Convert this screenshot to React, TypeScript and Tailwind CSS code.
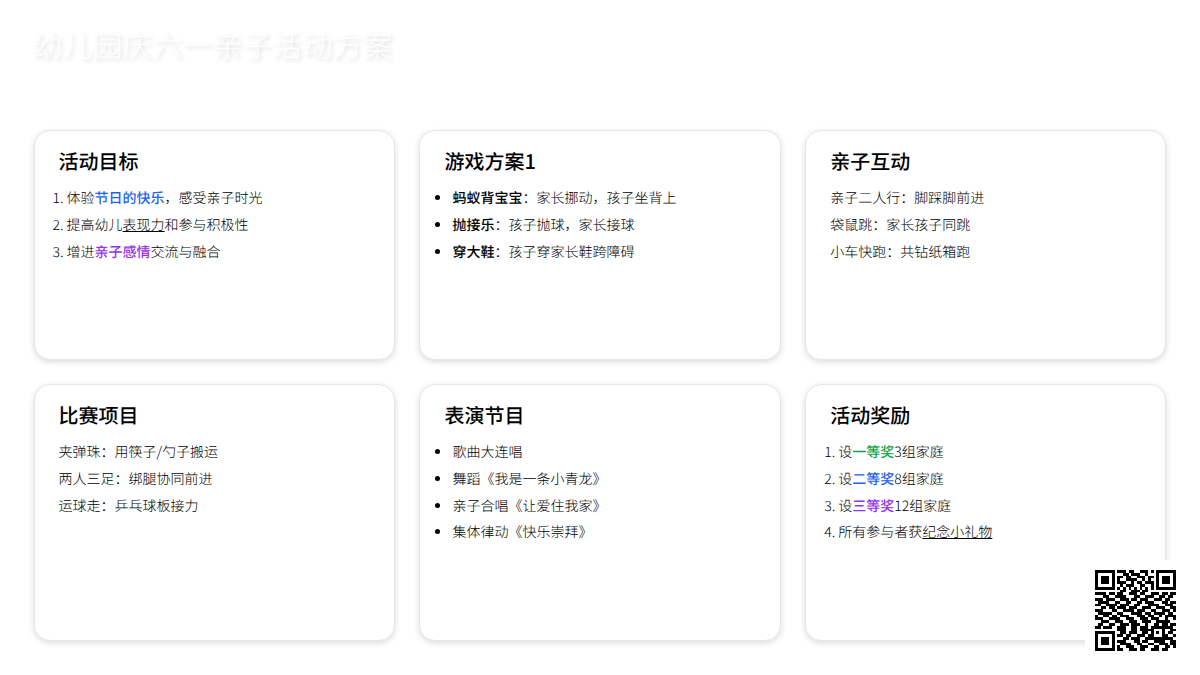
import React from "react";

const DATA = [
  "000000001110110011101000000000",
  "000000000011011100100000000000",
  "000000001101100111011000000000",
  "000000001001111001010000000000",
  "000000001110010110111000000000",
  "000000000101110011001000000000",
  "000000001010101010101000000000",
  "000000000110011101100000000000",
  "11110110110011101100111011011",
  "00011001111000110011100110110",
  "11101110011101101110011101100",
  "01111001100110011011100011011",
  "11001111011100110001111001110",
  "00110110111011100111001110011",
  "11100011001111011100110011101",
  "01111100110001111011011110110",
  "10011011011100011101100101111",
  "11100111100111001110111001001",
  "00111001110011100111001111100",
  "01100110011101110010011011011",
  "11011100111001101110000011110",
  "000000001110011011111011100110",
  "000000000110111001100011001101",
  "000000001101100111010011110011",
  "000000000011011100111110011100",
  "000000001110001101100111100111",
  "000000000111100110011001110110",
  "000000001001110011100110011011",
  "000000001100111011001110110001",
];

function buildQR(): boolean[][] {
  const m = Array.from({ length: 29 }, (_, y) =>
    Array.from({ length: 29 }, (_, x) => DATA[y][x] === "1"),
  );
  const finder = (ox: number, oy: number) => {
    for (let y = -1; y < 8; y++) {
      for (let x = -1; x < 8; x++) {
        const px = ox + x;
        const py = oy + y;
        if (px < 0 || py < 0 || px > 28 || py > 28) continue;
        const ring = x >= 0 && x <= 6 && y >= 0 && y <= 6 && (x === 0 || x === 6 || y === 0 || y === 6);
        const core = x >= 2 && x <= 4 && y >= 2 && y <= 4;
        m[py][px] = ring || core;
      }
    }
  };
  finder(0, 0);
  finder(22, 0);
  finder(0, 22);
  for (let y = 0; y < 5; y++) {
    for (let x = 0; x < 5; x++) {
      m[20 + y][20 + x] = x === 0 || x === 4 || y === 0 || y === 4 || (x === 2 && y === 2);
    }
  }
  return m;
}

const QR = buildQR();

function QRCode() {
  return (
    <svg width="81" height="81" viewBox="0 0 29 29" shapeRendering="crispEdges">
      {QR.flatMap((row, y) =>
        row.map((on, x) => (on ? <rect key={`${x}-${y}`} x={x} y={y} width="1" height="1" fill="#000" /> : null)),
      )}
    </svg>
  );
}

function Card({ title, children }: { title: string; children: React.ReactNode }) {
  return (
    <div className="rounded-2xl border border-[#e5e7eb] bg-white px-6 py-[15px] shadow-[0_2px_6px_rgba(0,0,0,0.14)]">
      <h3 className="mb-[9px] text-[20px] leading-[30px] font-medium text-black">{title}</h3>
      {children}
    </div>
  );
}

const Li = ({ children }: { children: React.ReactNode }) => (
  <li className="text-[14px] leading-[26.8px]">{children}</li>
);
const Ol = ({ children }: { children: React.ReactNode }) => <ol className="list-decimal pl-2">{children}</ol>;
const Ul = ({ children }: { children: React.ReactNode }) => <ul className="list-disc pl-2">{children}</ul>;
const P = ({ children }: { children: React.ReactNode }) => <p className="text-[14px] leading-[26.8px]">{children}</p>;
const Blue = ({ children }: { children: React.ReactNode }) => <span className="font-medium text-[#2563eb]">{children}</span>;
const Purple = ({ children }: { children: React.ReactNode }) => <span className="font-medium text-[#9333ea]">{children}</span>;
const Green = ({ children }: { children: React.ReactNode }) => <span className="font-medium text-[#16a34a]">{children}</span>;
const U = ({ children }: { children: React.ReactNode }) => <span className="underline">{children}</span>;
const B = ({ children }: { children: React.ReactNode }) => <strong className="font-medium text-black">{children}</strong>;

export default function App() {
  return (
    <div className="relative h-[675px] w-[1200px] overflow-hidden bg-white px-[33.6px] font-['Noto_Sans_CJK_SC',sans-serif] font-light text-black [text-rendering:geometricPrecision]">
      <h1 className="-ml-px pt-[22px] pb-[63px] text-[30px] leading-[45px] font-light text-white [text-shadow:2px_2px_4px_rgba(0,0,0,0.15)]">
        幼儿园庆六一亲子活动方案
      </h1>
      <div className="grid grid-cols-3 grid-rows-[229.5px_256.5px] gap-x-[24.8px] gap-y-[24.5px]">
        <Card title="活动目标">
          <Ol>
            <Li>体验<Blue>节日的快乐</Blue>，感受亲子时光</Li>
            <Li>提高幼儿<U>表现力</U>和参与积极性</Li>
            <Li>增进<Purple>亲子感情</Purple>交流与融合</Li>
          </Ol>
        </Card>
        <Card title="游戏方案1">
          <Ul>
            <Li><B>蚂蚁背宝宝</B>：家长挪动，孩子坐背上</Li>
            <Li><B>抛接乐</B>：孩子抛球，家长接球</Li>
            <Li><B>穿大鞋</B>：孩子穿家长鞋跨障碍</Li>
          </Ul>
        </Card>
        <Card title="亲子互动">
          <P>亲子二人行：脚踩脚前进</P>
          <P>袋鼠跳：家长孩子同跳</P>
          <P>小车快跑：共钻纸箱跑</P>
        </Card>
        <Card title="比赛项目">
          <P>夹弹珠：用筷子/勺子搬运</P>
          <P>两人三足：绑腿协同前进</P>
          <P>运球走：乒乓球板接力</P>
        </Card>
        <Card title="表演节目">
          <Ul>
            <Li>歌曲大连唱</Li>
            <Li>舞蹈《我是一条小青龙》</Li>
            <Li>亲子合唱《让爱住我家》</Li>
            <Li>集体律动《快乐崇拜》</Li>
          </Ul>
        </Card>
        <Card title="活动奖励">
          <Ol>
            <Li>设<Green>一等奖</Green>3组家庭</Li>
            <Li>设<Blue>二等奖</Blue>8组家庭</Li>
            <Li>设<Purple>三等奖</Purple>12组家庭</Li>
            <Li>所有参与者获<U>纪念小礼物</U></Li>
          </Ol>
        </Card>
      </div>
      <div className="absolute top-[560px] left-[1085px] bg-white p-[10px]">
        <QRCode />
      </div>
    </div>
  );
}
